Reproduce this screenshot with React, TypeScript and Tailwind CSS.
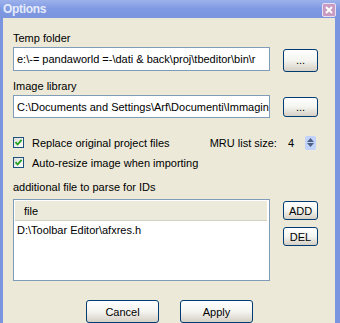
import React from 'react';

const font = { fontFamily: 'Tahoma, "Liberation Sans", "DejaVu Sans", sans-serif' };

function XpButton({ children, className = '' }: { children: React.ReactNode; className?: string }) {
    return (
        <div
            className={`flex items-center justify-center rounded-[3px] border border-[#003c74] bg-gradient-to-b from-[#ffffff] via-[#f4f4f0] to-[#d6d0c5] text-[11px] text-black ${className}`}
        >
            {children}
        </div>
    );
}

function Check({ label }: { label: string }) {
    return (
        <div className="flex items-center gap-[8px] h-[13px]">
            <div className="w-[11px] h-[11px] border border-[#1c5180] bg-gradient-to-br from-[#dcdcd7] to-[#ffffff] flex items-center justify-center">
                <svg width="9" height="9" viewBox="0 0 9 9">
                    <path d="M1.5 4.2 L3.6 6.5 L7.6 1.8" stroke="#21a121" strokeWidth="1.8" fill="none" />
                </svg>
            </div>
            <span>{label}</span>
        </div>
    );
}

export default function App() {
    return (
        <div className="w-[340px] h-[323px] overflow-hidden bg-[#7b96df] flex flex-col leading-[14px]" style={font}>
            <div className="h-[18px] flex items-center justify-between pl-[3px] pr-[4px] bg-gradient-to-b from-[#9db2ec] via-[#7f99e2] to-[#7a94de] shrink-0">
                <span className="text-[12px] font-bold text-[#e6ecfb] leading-none tracking-[-0.3px]">Options</span>
                <div className="w-[14px] h-[14px] mt-[2px] rounded-[2px] border border-[#e8e0f0] bg-[#c99bc2] flex items-center justify-center">
                    <svg width="8" height="8" viewBox="0 0 8 8">
                        <path d="M1 1 L7 7 M7 1 L1 7" stroke="#ffffff" strokeWidth="2" />
                    </svg>
                </div>
            </div>
            <div className="flex-1 ml-[3px] mr-[5px] bg-[#ece9d8] text-[11px] text-black pl-[10px] pt-[13px]">
                <div className="h-[14px]">Temp folder</div>
                <div className="flex items-center mt-[2px] h-[24px]">
                    <div className="w-[257px] h-[24px] border border-[#7f9db9] bg-white pl-[3px] flex items-center overflow-hidden whitespace-nowrap">
                        e:\-= pandaworld =-\dati &amp; back\proj\tbeditor\bin\r
                    </div>
                    <XpButton className="ml-[13px] w-[35px] h-[23px] mt-[2px]">...</XpButton>
                </div>
                <div className="h-[14px] mt-[8px]">Image library</div>
                <div className="flex items-center mt-[2px] h-[23px]">
                    <div className="w-[257px] h-[23px] border border-[#7f9db9] bg-white pl-[3px] flex items-center overflow-hidden whitespace-nowrap">
                        C:\Documents and Settings\Arf\Documenti\Immagini
                    </div>
                    <XpButton className="ml-[13px] w-[35px] h-[20px] mt-[1px]">...</XpButton>
                </div>
                <div className="mt-[18px] h-[13px] flex items-center justify-between pr-[19px]">
                    <Check label="Replace original project files" />
                    <div className="flex items-center">
                        <span>MRU list size:</span>
                        <span className="ml-[11px]">4</span>
                        <div className="ml-[11px] w-[11px] h-[14px] rounded-[2px] bg-[#c1d3fb] flex flex-col items-center justify-center gap-[1px]">
                            <svg width="7" height="4" viewBox="0 0 7 4"><path d="M0 4 L3.5 0 L7 4 Z" fill="#4d6185" /></svg>
                            <svg width="7" height="4" viewBox="0 0 7 4"><path d="M0 0 L3.5 4 L7 0 Z" fill="#4d6185" /></svg>
                        </div>
                    </div>
                </div>
                <div className="mt-[7px]">
                    <Check label="Auto-resize image when importing" />
                </div>
                <div className="mt-[11px] h-[14px]">additional file to parse for IDs</div>
                <div className="flex mt-[5px]">
                    <div className="w-[257px] h-[82px] border border-[#7f9db9] bg-white p-[1px] flex flex-col">
                        <div className="h-[20px] bg-[#ebeadb] border-b border-[#d6d2c2] mr-[1px] pl-[9px] flex items-center">
                            file
                        </div>
                        <div className="pl-[2px] mt-[2px]">D:\Toolbar Editor\afxres.h</div>
                    </div>
                    <div className="ml-[13px] flex flex-col gap-[7px] mt-[2px]">
                        <XpButton className="w-[35px] h-[19px]">ADD</XpButton>
                        <XpButton className="w-[35px] h-[19px]">DEL</XpButton>
                    </div>
                </div>
                <div className="flex mt-[19px] ml-[73px] gap-[21px]">
                    <XpButton className="w-[73px] h-[23px]">Cancel</XpButton>
                    <XpButton className="w-[73px] h-[23px]">Apply</XpButton>
                </div>
            </div>
        </div>
    );
}
